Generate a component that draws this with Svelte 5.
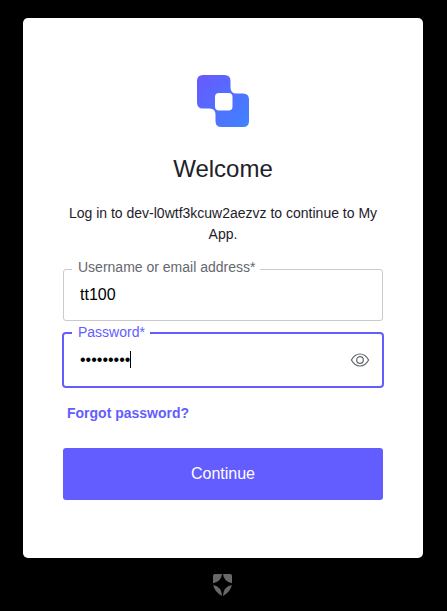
<script>
  let username = $state('tt100');
  const password = '•••••••••';
</script>

<main>
  <section class="card">
    <svg class="logo" width="52" height="52" viewBox="0 0 52 52" aria-hidden="true">
      <defs>
        <linearGradient id="brand" x1="0" y1="0" x2="1" y2="1">
          <stop offset="0.1" stop-color="#635dff" />
          <stop offset="1" stop-color="#3f83ff" />
        </linearGradient>
      </defs>
      <path
        fill="url(#brand)"
        fill-rule="evenodd"
        d="M6 0H27.5Q33.5 0 33.5 6V12.5Q33.5 18.5 39.5 18.5H46Q52 18.5 52 24.5V46Q52 52 46 52H24.500Q18.500 52 18.500 46V39.500Q18.500 33.500 12.500 33.500H6Q0 33.500 0 27.500V6Q0 0 6 0ZM22 18Q18 18 18 22V31.500Q18 35.500 22 35.500H31.500Q35.500 35.500 35.500 31.500V22Q35.500 18 31.500 18Z"
      />
    </svg>
    <h1>Welcome</h1>
    <p>Log in to dev-l0wtf3kcuw2aezvz to continue to My App.</p>
    <form onsubmit={(e) => e.preventDefault()}>
      <div class="field">
        <label for="username">Username or email address*</label>
        <input id="username" bind:value={username} />
      </div>
      <div class="field focused">
        <span class="label">Password*</span>
        <div class="secret"><span class="dots">{password}</span><i class="caret"></i></div>
        <button class="reveal" type="button" aria-label="Show password">
          <svg width="20" height="16" viewBox="0 0 20 16" fill="none" stroke="#65676e" stroke-width="1.2">
            <path d="M1.400 8C3.600 4 6.400 2 10 2s6.400 2 8.600 6c-2.200 4-5 6-8.600 6s-6.400-2-8.600-6Z" />
            <circle cx="10" cy="8" r="3.300" />
          </svg>
        </button>
      </div>
      <a href="#reset">Forgot password?</a>
      <button class="submit" type="submit">Continue</button>
    </form>
  </section>
  <svg class="shield" width="19" height="22" viewBox="0 0 19 22" fill="#686868" aria-hidden="true">
    <path d="M1.800 0H9Q8.300 7.800 0 9.200V1.800Q0 0 1.800 0Z" />
    <path d="M17.200 0H10Q10.700 7.800 19 9.200V1.800Q19 0 17.200 0Z" />
    <path d="M0.200 11Q8.500 12.500 9 22Q1.300 17.500 0.200 11Z" />
    <path d="M18.800 11Q10.500 12.500 10 22Q17.700 17.500 18.800 11Z" />
  </svg>
</main>

<style>
  :global(body) {
    background: #000;
  }
  main {
    box-sizing: border-box;
    height: 611px;
    padding-top: 18px;
    display: flex;
    flex-direction: column;
    align-items: center;
    background: #000;
    font-family: 'Liberation Sans', Arial, sans-serif;
    color: #1e212a;
    overflow: hidden;
  }
  .card {
    box-sizing: border-box;
    width: 400px;
    height: 540px;
    flex: none;
    padding: 57px 40px 0;
    background: #fff;
    border-radius: 5px;
    display: flex;
    flex-direction: column;
    align-items: center;
    margin-right: 1px;
  }
  .logo {
    flex: none;
  }
  h1 {
    margin: 28px 0 0;
    font-size: 24px;
    line-height: 28px;
    font-weight: 400;
  }
  p {
    margin: 20px 0 0;
    font-size: 14px;
    line-height: 21px;
    text-align: center;
  }
  form {
    width: 320px;
    margin-top: 24px;
    display: flex;
    flex-direction: column;
  }
  .field {
    position: relative;
    box-sizing: border-box;
    height: 52px;
    border: 1px solid #c9cace;
    border-radius: 3px;
    display: flex;
    align-items: center;
  }
  .field.focused {
    height: 56px;
    margin: 11px -1px 0;
    border: 2px solid #635dff;
    border-radius: 4px;
  }
  label,
  .label {
    position: absolute;
    left: 8px;
    top: -12px;
    padding: 0 5px 0 6px;
    background: #fff;
    font-size: 14px;
    line-height: 18px;
    color: #65676e;
    white-space: nowrap;
  }
  .label {
    top: -11px;
    color: #635dff;
  }
  input {
    box-sizing: border-box;
    width: 100%;
    height: 48px;
    padding: 0 16px;
    border: 0;
    outline: 0;
    background: none;
    font: 16px 'Liberation Sans', Arial, sans-serif;
    color: #000;
  }
  .secret {
    flex: 1;
    display: flex;
    align-items: center;
    padding-left: 16px;
    font-size: 16px;
    line-height: 18px;
    color: #000;
  }
  .caret {
    width: 1px;
    height: 17px;
    margin-top: -1px;
    background: #000;
  }
  .reveal {
    padding: 0;
    margin-right: 12px;
    border: 0;
    background: none;
    display: flex;
  }
  a {
    margin: 16px 0 0 4px;
    align-self: flex-start;
    font-size: 14px;
    line-height: 18px;
    font-weight: 700;
    color: #635dff;
    text-decoration: none;
  }
  .submit {
    height: 52px;
    margin-top: 26px;
    padding: 0;
    border: 0;
    border-radius: 3px;
    background: #635dff;
    color: #fff;
    font: 16px 'Liberation Sans', Arial, sans-serif;
  }
  .shield {
    flex: none;
    margin-top: 16px;
    margin-right: 2px;
  }
</style>
